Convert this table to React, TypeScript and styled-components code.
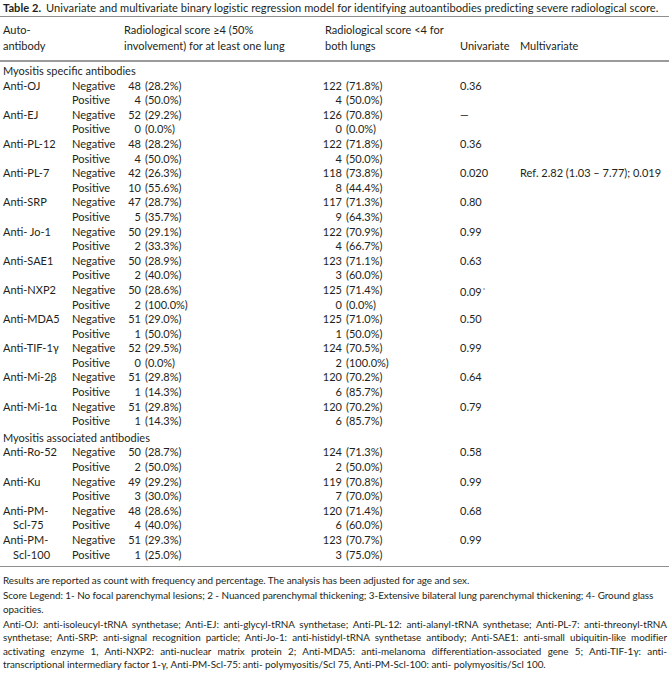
import styled, { createGlobalStyle } from 'styled-components';

const GlobalStyle = createGlobalStyle`
  body {
    margin: 0;
    background: #fff;
    color: #231f20;
    font-family: Lato, "Open Sans", sans-serif;
  }
`;

const COLS = '69px 49px 201px 138px 60px 1fr';

const Page = styled.div`
  width: 669px;
  padding: 1px 2px 0 3px;
  box-sizing: border-box;
`;

const Caption = styled.div`
  font-size: 11.1px;
  line-height: 13px;
  white-space: nowrap;
  letter-spacing: 0.03px;
  b {
    font-weight: 700;
    margin-right: 5px;
  }
`;

const Table = styled.div`
  margin-top: 2px;
  border-top: 1px solid #8f8f8f;
  border-bottom: 1.5px solid #8f8f8f;
  margin-left: -3px;
  margin-right: -2px;
  padding: 0 2px 4px 3px;
  font-size: 11px;
`;

const HeadRow = styled.div`
  display: grid;
  grid-template-columns: ${COLS};
  align-items: end;
  line-height: 16px;
  padding: 5px 2px 6px 3px;
  margin: 0 -2px 0 -3px;
  border-bottom: 2px solid #9a9a9a;
`;

const HeadCell = styled.div<{ $span?: number; $indent?: number }>`
  grid-column: span ${(p) => p.$span ?? 1};
  padding-left: ${(p) => p.$indent ?? 0}px;
`;

const Group = styled.div`
  line-height: 14.6px;
  padding-top: 2px;
`;

const Block = styled.div`
  display: grid;
  grid-template-columns: ${COLS};
  grid-auto-rows: 14.6px;
  line-height: 14.6px;
`;

const Name = styled.div`
  grid-row: span 2;
  white-space: nowrap;
`;

const NameCont = styled.div`
  padding-left: 10px;
`;

const Cell = styled.div`
  white-space: nowrap;
`;

const Count = styled.span<{ $w: number }>`
  display: inline-block;
  width: ${(p) => p.$w}px;
  text-align: right;
  margin-right: 4px;
`;

const Mark = styled.sup`
  font-size: 6px;
  vertical-align: 4px;
  margin-left: 1px;
`;

const Notes = styled.div`
  padding-top: 7px;
  font-size: 9.9px;
  line-height: 13.5px;
  letter-spacing: -0.04px;
  p {
    margin: 0 0 1.5px;
  }
`;

const Justified = styled.p`
  text-align: justify;
`;

type Entry = {
  name: string[];
  neg: [string, string];
  negB: [string, string];
  pos: [string, string];
  posB: [string, string];
  uni: React.ReactNode;
  multi?: string;
};

const specific: Entry[] = [
  { name: ['Anti-OJ'], neg: ['48', '(28.2%)'], negB: ['122', '(71.8%)'], pos: ['4', '(50.0%)'], posB: ['4', '(50.0%)'], uni: '0.36' },
  { name: ['Anti-EJ'], neg: ['52', '(29.2%)'], negB: ['126', '(70.8%)'], pos: ['0', '(0.0%)'], posB: ['0', '(0.0%)'], uni: '—' },
  { name: ['Anti-PL-12'], neg: ['48', '(28.2%)'], negB: ['122', '(71.8%)'], pos: ['4', '(50.0%)'], posB: ['4', '(50.0%)'], uni: '0.36' },
  { name: ['Anti-PL-7'], neg: ['42', '(26.3%)'], negB: ['118', '(73.8%)'], pos: ['10', '(55.6%)'], posB: ['8', '(44.4%)'], uni: '0.020', multi: 'Ref. 2.82 (1.03 – 7.77); 0.019' },
  { name: ['Anti-SRP'], neg: ['47', '(28.7%)'], negB: ['117', '(71.3%)'], pos: ['5', '(35.7%)'], posB: ['9', '(64.3%)'], uni: '0.80' },
  { name: ['Anti- Jo-1'], neg: ['50', '(29.1%)'], negB: ['122', '(70.9%)'], pos: ['2', '(33.3%)'], posB: ['4', '(66.7%)'], uni: '0.99' },
  { name: ['Anti-SAE1'], neg: ['50', '(28.9%)'], negB: ['123', '(71.1%)'], pos: ['2', '(40.0%)'], posB: ['3', '(60.0%)'], uni: '0.63' },
  { name: ['Anti-NXP2'], neg: ['50', '(28.6%)'], negB: ['125', '(71.4%)'], pos: ['2', '(100.0%)'], posB: ['0', '(0.0%)'], uni: <>0.09<Mark>*</Mark></> },
  { name: ['Anti-MDA5'], neg: ['51', '(29.0%)'], negB: ['125', '(71.0%)'], pos: ['1', '(50.0%)'], posB: ['1', '(50.0%)'], uni: '0.50' },
  { name: ['Anti-TIF-1γ'], neg: ['52', '(29.5%)'], negB: ['124', '(70.5%)'], pos: ['0', '(0.0%)'], posB: ['2', '(100.0%)'], uni: '0.99' },
  { name: ['Anti-Mi-2β'], neg: ['51', '(29.8%)'], negB: ['120', '(70.2%)'], pos: ['1', '(14.3%)'], posB: ['6', '(85.7%)'], uni: '0.64' },
  { name: ['Anti-Mi-1α'], neg: ['51', '(29.8%)'], negB: ['120', '(70.2%)'], pos: ['1', '(14.3%)'], posB: ['6', '(85.7%)'], uni: '0.79' },
];

const associated: Entry[] = [
  { name: ['Anti-Ro-52'], neg: ['50', '(28.7%)'], negB: ['124', '(71.3%)'], pos: ['2', '(50.0%)'], posB: ['2', '(50.0%)'], uni: '0.58' },
  { name: ['Anti-Ku'], neg: ['49', '(29.2%)'], negB: ['119', '(70.8%)'], pos: ['3', '(30.0%)'], posB: ['7', '(70.0%)'], uni: '0.99' },
  { name: ['Anti-PM-', 'Scl-75'], neg: ['48', '(28.6%)'], negB: ['120', '(71.4%)'], pos: ['4', '(40.0%)'], posB: ['6', '(60.0%)'], uni: '0.68' },
  { name: ['Anti-PM-', 'Scl-100'], neg: ['51', '(29.3%)'], negB: ['123', '(70.7%)'], pos: ['1', '(25.0%)'], posB: ['3', '(75.0%)'], uni: '0.99' },
];

function Counts({ v, w }: { v: [string, string]; w: number }) {
  return (
    <Cell>
      <Count $w={w}>{v[0]}</Count>
      {v[1]}
    </Cell>
  );
}

function AntibodyRows({ e }: { e: Entry }) {
  return (
    <Block>
      <Name>
        {e.name[0]}
        {e.name[1] && <NameCont>{e.name[1]}</NameCont>}
      </Name>
      <Cell>Negative</Cell>
      <Counts v={e.neg} w={20} />
      <Counts v={e.negB} w={20} />
      <Cell>{e.uni}</Cell>
      <Cell>{e.multi ?? ''}</Cell>
      <Cell>Positive</Cell>
      <Counts v={e.pos} w={20} />
      <Counts v={e.posB} w={20} />
      <Cell />
      <Cell />
    </Block>
  );
}

export default function App() {
  return (
    <Page>
      <GlobalStyle />
      <Caption>
        <b>Table 2.</b>Univariate and multivariate binary logistic regression model for identifying autoantibodies predicting severe radiological score.
      </Caption>
      <Table>
        <HeadRow>
          <HeadCell>
            Auto-
            <br />
            antibody
          </HeadCell>
          <HeadCell $span={2} $indent={52}>
            Radiological score ≥4 (50%
            <br />
            involvement) for at least one lung
          </HeadCell>
          <HeadCell $indent={3}>
            Radiological score &lt;4 for
            <br />
            both lungs
          </HeadCell>
          <HeadCell>Univariate</HeadCell>
          <HeadCell>Multivariate</HeadCell>
        </HeadRow>
        <Group>Myositis specific antibodies</Group>
        {specific.map((e) => (
          <AntibodyRows key={e.name.join('')} e={e} />
        ))}
        <Group>Myositis associated antibodies</Group>
        {associated.map((e) => (
          <AntibodyRows key={e.name.join('')} e={e} />
        ))}
      </Table>
      <Notes>
        <p>Results are reported as count with frequency and percentage. The analysis has been adjusted for age and sex.</p>
        <p>
          Score Legend: 1- No focal parenchymal lesions; 2 - Nuanced parenchymal thickening; 3-Extensive bilateral lung parenchymal thickening; 4- Ground glass opacities.
        </p>
        <Justified>
          Anti-OJ: anti-isoleucyl-tRNA synthetase; Anti-EJ: anti-glycyl-tRNA synthetase; Anti-PL-12: anti-alanyl-tRNA synthetase; Anti-PL-7: anti-threonyl-tRNA synthetase; Anti-SRP: anti-signal recognition particle; Anti-Jo-1: anti-histidyl-tRNA synthetase antibody; Anti-SAE1: anti-small ubiquitin-like modifier activating enzyme 1, Anti-NXP2: anti-nuclear matrix protein 2; Anti-MDA5: anti-melanoma differentiation-associated gene 5; Anti-TIF-1γ: anti-transcriptional intermediary factor 1-γ, Anti-PM-Scl-75: anti- polymyositis/Scl 75, Anti-PM-Scl-100: anti- polymyositis/Scl 100.
        </Justified>
      </Notes>
    </Page>
  );
}
